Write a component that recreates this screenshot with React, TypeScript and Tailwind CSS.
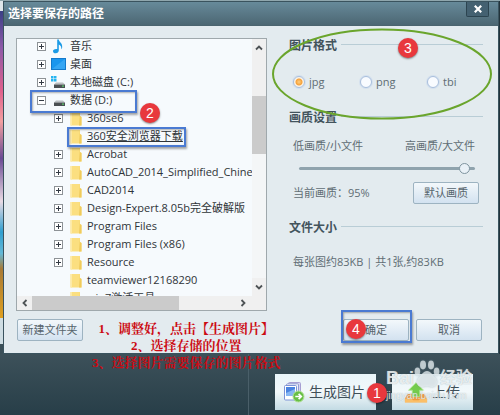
/**
 * Save-path dialog over the collage editor, with the numbered tutorial marks.
 *
 *   - Folder tree on the left, export options on the right
 *   - Editor footer with the generate / upload buttons underneath
 */

import { useState } from "react";
import type { ReactNode } from "react";

type IconName = "music" | "desktop" | "system" | "drive" | "folder";

interface TreeItem {
  label: string;
  icon: IconName;
  child?: boolean;
  state?: "open" | "closed";
  selected?: boolean;
  mark?: ReactNode;
}

const TREE: TreeItem[] = [
  { label: "音乐", icon: "music", state: "closed" },
  { label: "桌面", icon: "desktop", state: "closed" },
  { label: "本地磁盘 (C:)", icon: "system", state: "closed" },
  {
    label: "数据 (D:)",
    icon: "drive",
    state: "open",
    mark: (
      <>
        <Frame className="left-[13px] -top-px h-[23px] w-[107px]" />
        <Badge className="left-[123px] top-3">2</Badge>
      </>
    ),
  },
  { label: "360se6", icon: "folder", child: true, state: "closed" },
  {
    label: "360安全浏览器下载",
    icon: "folder",
    child: true,
    selected: true,
    mark: <Frame className="left-[50px] top-0 h-5 w-[119px]" />,
  },
  { label: "Acrobat", icon: "folder", child: true, state: "closed" },
  { label: "AutoCAD_2014_Simplified_Chinese", icon: "folder", child: true, state: "closed" },
  { label: "CAD2014", icon: "folder", child: true, state: "closed" },
  { label: "Design-Expert.8.05b完全破解版", icon: "folder", child: true, state: "closed" },
  { label: "Program Files", icon: "folder", child: true, state: "closed" },
  { label: "Program Files (x86)", icon: "folder", child: true, state: "closed" },
  { label: "Resource", icon: "folder", child: true, state: "closed" },
  { label: "teamviewer12168290", icon: "folder", child: true },
  { label: "win7激活工具", icon: "folder", child: true },
];

const FORMATS = ["jpg", "png", "tbi"];

export default function App() {
  return (
    <div className="flex min-h-screen flex-col overflow-hidden bg-[#2b414b] font-['Open_Sans','Noto_Sans_CJK_SC',sans-serif] text-[11px] leading-4">
      <div className="flex h-px bg-[#8fa6ad]" />
      <div className="flex">
        {/* Sliver of the photo behind the dialog */}
        <div className="flex w-[3px] shrink-0 flex-col">
          <div className="h-[10px] bg-[#dfe6ea]" />
          <div className="flex-1 bg-[linear-gradient(#3b3f86,#8d5aa8_12%,#e0608c_26%,#f3a0a0_36%,#6a4a94_48%,#e9dbe4_62%,#2f9fd0_72%,#63b8d6_79%,#a87a35_84%,#e0a020)]" />
          <div className="h-[26px] bg-[#cfdde3]" />
          <div className="h-[10px] bg-[#3b4f58]" />
        </div>
        <SaveDialog />
        <div className="w-px shrink-0 bg-[#22333b]" />
      </div>
      <EditorFooter />
    </div>
  );
}

function SaveDialog() {
  return (
    <section className="relative min-w-0 flex-1 border border-[#3a535e] bg-[#e3ebef]" aria-label="选择要保存的路径">
      <header className="flex h-6 items-start justify-between border-b border-[#4b646f] bg-linear-to-b from-[#678a9a] to-[#4c6773] pr-[9px] pl-1">
        <h1 className="pt-1 text-[12px] font-bold text-white">选择要保存的路径</h1>
        <button
          type="button"
          aria-label="关闭"
          className="flex h-[15px] w-[23px] items-center justify-center rounded-b-xs border border-t-0 border-[#2c4450] bg-[#446171]"
        >
          <svg viewBox="0 0 8 8" className="size-2" stroke="#fff" strokeWidth="2.2">
            <path d="M0.8 0.8 7.2 7.2M7.2 0.8 0.8 7.2" />
          </svg>
        </button>
      </header>

      <div className="flex gap-[22px] pt-3 pr-[15px] pl-3">
        <FolderTree />
        <ExportOptions />
      </div>

      <footer className="relative flex items-center justify-between pt-2 pr-4 pb-3 pl-[13px]">
        <DialogButton>新建文件夹</DialogButton>
        <div className="flex gap-[7px]">
          <div className="relative">
            <DialogButton>确定</DialogButton>
            <Frame className="-top-[9px] -left-[2px] h-[33px] w-[71px]" />
            <Badge className="left-[3px] top-0">4</Badge>
          </div>
          <DialogButton>取消</DialogButton>
        </div>
        <Notes />
      </footer>
    </section>
  );
}

function FolderTree() {
  return (
    <div className="min-w-0 flex-1 border border-[#9fa8ac] bg-[#f6fafd]">
      <div className="flex h-[257px]">
        <ul className="-mt-0.5 min-w-0 flex-1 overflow-hidden text-[#2f3438]">
          {TREE.map((item) => (
            <TreeRow key={item.label} item={item} />
          ))}
        </ul>
        <div className="flex w-[14px] shrink-0 flex-col items-stretch bg-[#f0f0f0]">
          <ArrowButton label="向上滚动" d="M1 5.5 4 2.5 7 5.5" className="h-[18px]" />
          <div className="mt-[39px] h-[58px] bg-[#cbcbcb]" />
          <div className="flex-1 bg-[#f4f6f7]" />
          <ArrowButton label="向下滚动" d="M1 2.5 4 5.5 7 2.5" className="h-[18px]" />
        </div>
      </div>
      <div className="flex h-[14px] bg-[#f0f0f0]">
        <ArrowButton label="向左滚动" d="M5.5 1 2.5 4 5.5 7" className="w-[15px]" />
        <div className="w-[147px] bg-[#cbcbcb]" />
        <div className="flex-1" />
        <ArrowButton label="向右滚动" d="M2.5 1 5.5 4 2.5 7" className="mr-[14px] w-[18px]" />
      </div>
    </div>
  );
}

function TreeRow({ item }: { item: TreeItem }) {
  return (
    <li className={`relative flex h-[18px] items-center whitespace-nowrap ${item.child ? "pl-[37px]" : "pl-5"}`}>
      {item.state ? (
        <button
          type="button"
          aria-label={item.label}
          aria-expanded={item.state === "open"}
          className="size-[9px] shrink-0"
        >
          <svg viewBox="0 0 9 9" className="block size-[9px]" fill="none">
            <rect x="0.5" y="0.5" width="8" height="8" fill="#fff" stroke="#8d9296" />
            <path d={item.state === "open" ? "M2 4.5H7" : "M2 4.5H7M4.5 2V7"} stroke="#333a44" />
          </svg>
        </button>
      ) : (
        <span className="size-[9px] shrink-0" />
      )}
      <span className={`flex shrink-0 justify-center ${item.child ? "ml-[7px] w-[12px]" : "ml-1 w-4"}`}>
        <TreeIcon name={item.icon} />
      </span>
      <span className={`${item.child ? "ml-[5px]" : "ml-1"} ${item.selected ? "underline" : ""}`}>{item.label}</span>
      {item.mark}
    </li>
  );
}

function TreeIcon({ name }: { name: IconName }) {
  if (name === "music") {
    return (
      <svg viewBox="0 0 12 15" className="h-[15px] w-3">
        <path
          d="M5.2 0.5H6.8C7 3 10.6 4 10.2 8.2 10 9.3 9.6 9.8 9.2 10.2 9.6 7.6 8.6 6 6.8 5.4V11.6C6.8 13.2 5.4 14.3 3.7 14.3 2 14.3 1 13.4 1 12.2 1 10.6 2.6 9.6 5.2 10Z"
          fill="#1c9be6"
        />
      </svg>
    );
  }
  if (name === "desktop") {
    return (
      <svg viewBox="0 0 15 12" className="h-3 w-[15px]">
        <rect x="0.5" y="0.5" width="14" height="11" fill="#1a96ee" stroke="#1379cb" />
        <path d="M1 11 14 1V11Z" fill="#35a6f4" />
      </svg>
    );
  }
  if (name === "folder") {
    return (
      <svg viewBox="0 0 12 15" className="h-[15px] w-3">
        <path d="M0.5 1H10V5L11.5 6V14.5H0.5Z" fill="#fbdf80" />
        <path d="M10 1V5L11.5 6V14.5H9Z" fill="#f0cb5c" />
        <path d="M0.5 1H2V14.5H0.5Z" fill="#fdeaa6" />
      </svg>
    );
  }
  return (
    <svg viewBox="0 0 15 13" className="h-[13px] w-[15px]">
      {name === "system" && (
        <path d="M0 0H2.5V2.5H0ZM3 0H5.5V2.5H3ZM0 3H2.5V5.5H0ZM3 3H5.5V5.5H3Z" fill="#25b4f0" />
      )}
      <path d="M5 6.5H12L14 8.5H3Z" fill="#b9bec1" />
      <rect x="3" y="8.5" width="11" height="3.5" fill="#4a4f52" />
      <rect x="11" y="9.5" width="2" height="1.2" fill="#5bd06a" />
    </svg>
  );
}

function ArrowButton({ label, d, className }: { label: string; d: string; className: string }) {
  return (
    <button type="button" aria-label={label} className={`flex items-center justify-center ${className}`}>
      <svg viewBox="0 0 8 8" className="size-2" fill="none" stroke="#4e5356" strokeWidth="1.8">
        <path d={d} />
      </svg>
    </button>
  );
}

function ExportOptions() {
  const [format, setFormat] = useState("jpg");

  return (
    <div className="relative w-[194px] shrink-0 text-[#606d74]">
      <SectionTitle>图片格式</SectionTitle>
      <div className="mt-5 flex pl-1">
        {FORMATS.map((name) => (
          <label key={name} className="flex w-[67px] shrink-0 items-center gap-1">
            <input
              type="radio"
              name="format"
              checked={format === name}
              onChange={() => setFormat(name)}
              className="size-3 appearance-none rounded-full border border-[#a9bfdc] bg-[#f8fbff] shadow-[0_0_0_1px_#d3e0ee] checked:bg-[radial-gradient(circle,#ffcf80_0,#f5a13a_3px,#fbf3e6_4px)]"
            />
            {name}
          </label>
        ))}
      </div>

      <div className="mt-5">
        <SectionTitle>画质设置</SectionTitle>
      </div>
      <div className="mt-3 flex justify-between pr-2 pl-1">
        <span>低画质/小文件</span>
        <span>高画质/大文件</span>
      </div>
      <div className="mt-1.5 flex h-4 items-center pr-2 pl-[10px]">
        <input
          type="range"
          aria-label="画质设置"
          defaultValue={97}
          className="h-3 w-full appearance-none bg-transparent [&::-webkit-slider-runnable-track]:h-[3px] [&::-webkit-slider-runnable-track]:rounded-full [&::-webkit-slider-runnable-track]:bg-[#8fa3ad] [&::-webkit-slider-thumb]:-mt-1 [&::-webkit-slider-thumb]:size-[11px] [&::-webkit-slider-thumb]:appearance-none [&::-webkit-slider-thumb]:rounded-full [&::-webkit-slider-thumb]:border [&::-webkit-slider-thumb]:border-[#7f949f] [&::-webkit-slider-thumb]:bg-[#e9f1f7]"
        />
      </div>
      <div className="mt-1.5 flex items-center justify-between pr-1 pl-1">
        <span>当前画质：95%</span>
        <DialogButton>默认画质</DialogButton>
      </div>

      <div className="mt-4">
        <SectionTitle>文件大小</SectionTitle>
      </div>
      <p className="mt-[18px] pl-1">每张图约83KB | 共1张,约83KB</p>

      {/* Hand-drawn ring around the format options */}
      <svg viewBox="0 0 220 92" className="pointer-events-none absolute -top-[10px] -left-[17px] h-[92px] w-[220px]">
        <ellipse cx="110" cy="46" rx="109" ry="44.5" fill="none" stroke="#6aa52c" strokeWidth="2" />
      </svg>
      <Badge className="top-0 left-[109px]">3</Badge>
    </div>
  );
}

function SectionTitle({ children }: { children: ReactNode }) {
  return (
    <div className="flex items-center gap-1">
      <h2 className="text-[12px] font-bold text-[#43545d]">{children}</h2>
      <span className="mb-1 h-px flex-1 bg-[#b9cdd6]" />
    </div>
  );
}

function DialogButton({ children }: { children: ReactNode }) {
  return (
    <button
      type="button"
      className="h-[22px] w-[66px] rounded-xs border border-[#9db3c1] bg-linear-to-b from-[#f3f8fb] to-[#d3e2f0] text-[#56646c]"
    >
      {children}
    </button>
  );
}

/** Red step-by-step notes written across the dialog's lower edge */
function Notes() {
  return (
    <div className="pointer-events-none absolute top-[9px] left-[88px] text-center font-['Liberation_Serif','Noto_Serif_CJK_SC','Noto_Sans_CJK_SC',serif] text-[13px] leading-[17px] font-bold whitespace-nowrap text-[#cc0a12]">
      <p>1、调整好，点击【生成图片】</p>
      <p>2、选择存储的位置</p>
      <p>3、选择图片需要保存的图片格式</p>
    </div>
  );
}

function Badge({ children, className }: { children: ReactNode; className: string }) {
  return (
    <span
      className={`absolute z-20 flex size-5 items-center justify-center rounded-full bg-[#e8383d] font-['Liberation_Sans',sans-serif] text-[14px] text-white shadow-[0_1px_2px_rgba(0,0,0,0.45)] ${className}`}
    >
      {children}
    </span>
  );
}

function Frame({ className }: { className: string }) {
  return (
    <span
      className={`pointer-events-none absolute z-10 border-2 border-[#4a7ad2] shadow-[1px_2px_2px_rgba(0,0,0,0.35),inset_1px_1px_2px_rgba(0,0,0,0.3)] ${className}`}
    />
  );
}

function EditorFooter() {
  return (
    <div className="flex flex-1 bg-linear-to-b from-[#3d515a] to-[#273e48]">
      <div className="w-[249px] border-r border-[#4a5f69]" />
      <div className="flex flex-1 items-start gap-4 pt-5 pb-1.5 pl-[26px]">
        <div className="relative">
          <button
            type="button"
            className="flex h-9 w-[101px] items-center gap-1 bg-linear-to-b from-[#e9f5f9] via-[#f2f8fa] to-[#c3dbe4] pl-2 text-[14px] text-[#3f4f58]"
          >
            <PicturesIcon />
            <span className="whitespace-nowrap">生成图片</span>
          </button>
          <Badge className="top-[9px] left-[92px]">1</Badge>
        </div>
        <div className="relative">
          <button
            type="button"
            className="flex h-9 w-[81px] items-center gap-1 bg-linear-to-b from-[#e9f5f9] via-[#f2f8fa] to-[#c3dbe4] pl-3 text-[14px] text-[#3f4f58]"
          >
            <UploadIcon />
            <span className="whitespace-nowrap">上传</span>
          </button>
          <Watermark />
        </div>
      </div>
    </div>
  );
}

function PicturesIcon() {
  return (
    <svg viewBox="0 0 22 22" className="size-[22px]">
      <rect x="5.5" y="1.5" width="12" height="14" rx="1" fill="#d9d3f3" stroke="#a79fd3" />
      <rect x="3.5" y="2.8" width="12" height="14" rx="1" fill="#eef1fb" stroke="#8f9bd0" />
      <rect x="1.5" y="4.5" width="12" height="14.5" rx="1" fill="#fff" stroke="#7d93d6" />
      <rect x="3" y="6" width="9" height="9" fill="#4a83e0" />
      <path d="M3 12 12 8V15H3Z" fill="#86b6f3" />
      <circle cx="15.5" cy="15.5" r="5.5" fill="#68bf45" stroke="#b4e29a" />
      <path d="M12.3 15.5H18M15.6 12.8 18.3 15.5 15.6 18.2" fill="none" stroke="#fff" strokeWidth="1.7" />
    </svg>
  );
}

function UploadIcon() {
  return (
    <svg viewBox="0 0 26 24" className="h-6 w-6">
      <path d="M4 14H22L25 19V23H1V19Z" fill="#f39b3d" />
      <path d="M1 19H8L10 21H16L18 19H25V23.5H1Z" fill="#fbbf68" />
      <path d="M13 2 21 10H17V17H9V10H5Z" fill="#74cc4c" stroke="#a8e388" />
    </svg>
  );
}

/** Site watermark laid over the upload button */
function Watermark() {
  return (
    <div className="pointer-events-none absolute -top-[14px] -left-[6px] w-[92px] font-['Liberation_Sans','Noto_Sans_CJK_SC',sans-serif] text-white/75 [text-shadow:0_0_1px_rgba(120,145,155,0.7)]">
      <div className="flex items-end">
        <span className="text-[18px] leading-5 font-bold">Bai</span>
        <svg viewBox="0 0 26 28" className="h-7 w-[26px] drop-shadow-[0_0_1px_rgba(110,135,145,0.6)]" fill="#e6edf0" fillOpacity="0.75">
          <ellipse cx="9" cy="5" rx="3" ry="4.4" />
          <ellipse cx="17" cy="5" rx="3" ry="4.4" />
          <ellipse cx="3.4" cy="11.5" rx="2.8" ry="4" />
          <ellipse cx="22.6" cy="11.5" rx="2.8" ry="4" />
          <path d="M13 11C17 11 18 15 21 17.5 24 20 24 26.5 18.5 27 16 27.2 15 26.3 13 26.3S10 27.2 7.5 27C2 26.5 2 20 5 17.5 8 15 9 11 13 11Z" />
        </svg>
        <span className="text-[16px] leading-5 font-bold">经验</span>
      </div>
      <p className="mt-0.5 text-[10px] leading-3">jingyan.baidu.com</p>
    </div>
  );
}
